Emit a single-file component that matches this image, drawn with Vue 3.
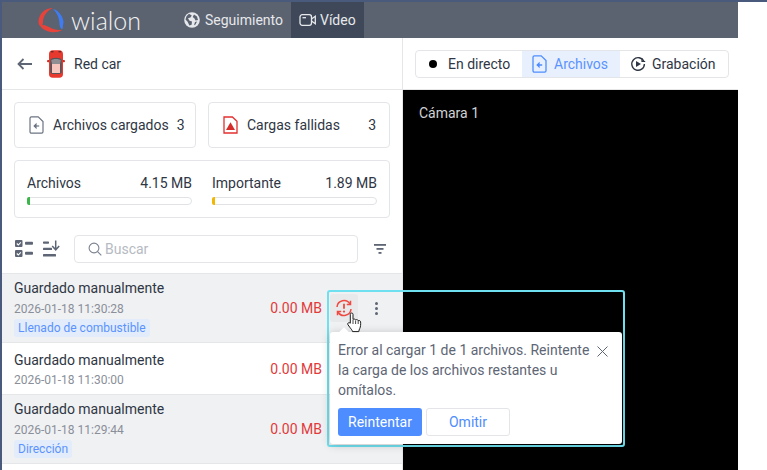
<script setup>
const rows = [
  { title: 'Guardado manualmente', time: '2026-01-18 11:30:28', tag: 'Llenado de combustible', shaded: true },
  { title: 'Guardado manualmente', time: '2026-01-18 11:30:00', tag: '', shaded: false },
  { title: 'Guardado manualmente', time: '2026-01-18 11:29:44', tag: 'Dirección', shaded: true },
]
</script>

<template>
  <div class="page">
    <div class="window">
      <header class="topbar">
        <div class="logo">
          <svg class="logo-mark" width="30" height="30" viewBox="0 0 30 30">
            <path d="M17 3C9 3 2.500 9 2.500 17c0 1.500.5 3 1.500 4 1.500 0 3-2 3-4C7 12 10 6 17 3z" fill="#e8433a"/>
            <path d="M4 20c1 4 7 6.500 11 7 4 .5 8 0 11-2-5 0-9-.5-13-3-3-1.500-6-3-9-2z" fill="#e8433a"/>
            <path d="M17 4c5 1 10 7 10.500 13l-1 7c-1.500 0-3-2-3-5 0-6-2.500-11-6.500-15z" fill="#3f7cf2"/>
          </svg>
          <span class="logo-text">wialon</span>
        </div>
        <nav class="nav">
          <div class="nav-item">
            <svg width="16" height="16" viewBox="0 0 16 16"><circle cx="8" cy="8" r="7.800" fill="#e6e8eb"/><path d="M5 1.800 7.800 3.600 6.500 5.600 4 6.200 5.500 8.800 8 9.500 7.600 12.800 5.400 13.400 3.600 9.800 1.500 7.500 2.500 4.200zM10 2.500l3 2 1 3.500-2.500.5-1-2-1.800-1.500zM11 10l2-.5-1.500 3-1.500.8z" fill="#5b6270"/></svg>
            <span>Seguimiento</span>
          </div>
          <div class="nav-item active">
            <svg width="18" height="14" viewBox="0 0 18 14" fill="none" stroke="#e6e8eb" stroke-width="1.300"><rect x="1" y="1.700" width="11.500" height="10.600" rx="2.200"/><path d="M3.500 4.700h3.500"/><path d="M12.500 6 16.300 3.300v7.400L12.500 8"/></svg>
            <span>Vídeo</span>
          </div>
        </nav>
      </header>

      <main class="body">
        <section class="left">
          <div class="vehicle">
            <svg width="15" height="12" viewBox="0 0 15 12" fill="none" stroke="#5e6675" stroke-width="1.800"><path d="M15 6H1.500M6.500 1 1.500 6l5 5"/></svg>
            <svg class="car" width="18" height="28" viewBox="0 0 18 28">
              <rect x="0" y="10" width="3" height="2.200" rx="1" fill="#c9302a"/><rect x="15" y="10" width="3" height="2.200" rx="1" fill="#c9302a"/>
              <rect x="2" y="0.300" width="14" height="27.400" rx="3.800" fill="#e8392f"/>
              <rect x="4" y="1" width="2.500" height="1.400" fill="#6a2a28"/><rect x="11.500" y="1" width="2.500" height="1.400" fill="#6a2a28"/>
              <path d="M3.300 10C4 7 14 7 14.700 10L14.700 22.500 13 24H5L3.300 22.500z" fill="#55555a"/>
              <path d="M4.300 10.500C5 8.500 13 8.500 13.700 10.500L13 14H5z" fill="#8f8f94"/>
              <rect x="5" y="14" width="8" height="9" fill="#f9c6bd"/>
            </svg>
            <span class="vehicle-name">Red car</span>
          </div>

          <div class="cards">
            <div class="card">
              <svg width="15" height="18" viewBox="0 0 15 18" fill="none" stroke="#6c7482" stroke-width="1.200"><path d="M1 2.200A1.400 1.400 0 0 1 2.400.8h6.800L14 5.600v10.200a1.400 1.400 0 0 1-1.400 1.400H2.400A1.400 1.400 0 0 1 1 15.800z"/><path d="M10.200 10H5.400"/><path d="M7 8.200 5.200 10 7 11.800z" fill="#6c7482"/></svg>
              <span class="card-label">Archivos cargados</span>
              <span class="card-count">3</span>
            </div>
            <div class="card">
              <svg width="15" height="18" viewBox="0 0 15 18" fill="none"><path d="M1 1h8.400L14 5.400V17H1z" stroke="#e32f2f" stroke-width="1.300"/><path d="M7.500 6.200 12 14H3z" fill="#d52b2b"/></svg>
              <span class="card-label">Cargas fallidas</span>
              <span class="card-count">3</span>
            </div>
          </div>

          <div class="storage">
            <div class="meter">
              <div class="meter-head"><span>Archivos</span><span>4.15 MB</span></div>
              <div class="track"><i class="fill green"></i></div>
            </div>
            <div class="meter">
              <div class="meter-head"><span>Importante</span><span>1.89 MB</span></div>
              <div class="track"><i class="fill amber"></i></div>
            </div>
          </div>

          <div class="toolbar">
            <svg width="18" height="18" viewBox="0 0 18 18" fill="#5e6675"><rect x="0" y="0" width="7.500" height="7" rx="1"/><rect x="0" y="10" width="7.500" height="7" rx="1"/><rect x="10" y="1.800" width="8" height="3" rx=".8"/><rect x="10" y="11.800" width="8" height="3" rx=".8"/><path d="M1.800 3.500 3.300 5 5.800 2.300M1.800 13.500 3.300 15l2.500-2.700" fill="none" stroke="#fff" stroke-width="1.100"/></svg>
            <svg class="sort" width="19" height="18" viewBox="0 0 19 18" fill="#5e6675"><rect x="0" y="1.500" width="6" height="2.200" rx=".6"/><rect x="0" y="7.800" width="9" height="2.200" rx=".6"/><rect x="0" y="14" width="13" height="2.500" rx=".6"/><path d="M12.700 .5v9M9.200 6l3.500 3.800L16.200 6" fill="none" stroke="#5e6675" stroke-width="1.500"/></svg>
            <div class="search">
              <svg width="14" height="14" viewBox="0 0 14 14" fill="none" stroke="#7b8290" stroke-width="1.100"><circle cx="6" cy="6" r="4.900"/><path d="m9.600 9.600 3.700 3.700"/></svg>
              <span>Buscar</span>
            </div>
            <svg class="filter" width="12" height="10" viewBox="0 0 12 10" fill="#5e6675"><rect x="0" y="0" width="12" height="1.800"/><rect x="2.500" y="4" width="7" height="1.800"/><rect x="4.500" y="8" width="3" height="1.800"/></svg>
          </div>

          <div class="list">
            <div v-for="(row, i) in rows" :key="i" class="row" :class="{ shaded: row.shaded, tall: row.tag }">
              <div class="row-main">
                <div class="row-title">{{ row.title }}</div>
                <div class="row-time">{{ row.time }}</div>
                <div v-if="row.tag" class="tag">{{ row.tag }}</div>
              </div>
              <div class="row-size">0.00 MB</div>
            </div>
          </div>
        </section>

        <section class="right">
          <div class="tabs-bar">
            <div class="tabs">
              <div class="tab"><i class="dot"></i><span>En directo</span></div>
              <div class="tab on">
                <svg width="15" height="18" viewBox="0 0 15 18" fill="none" stroke="#4d8dff" stroke-width="1.300"><path d="M1 2.200A1.400 1.400 0 0 1 2.400.8h6.800L14 5.600v10.200a1.400 1.400 0 0 1-1.400 1.400H2.400A1.400 1.400 0 0 1 1 15.800z"/><path d="M10.200 10H5.400"/><path d="M7 8.200 5.200 10 7 11.800z" fill="#4d8dff"/></svg>
                <span>Archivos</span>
              </div>
              <div class="tab">
                <svg width="16" height="16" viewBox="0 0 16 16" fill="none" stroke="#2f3644" stroke-width="1.400"><path d="M13.800 5.300A6.300 6.300 0 1 0 14.400 8"/><path d="M12 2.200v3.300h3.200" stroke-width="1.200"/><path d="M6 5l5 3-5 3z" fill="#2f3644" stroke="none"/></svg>
                <span>Grabación</span>
              </div>
            </div>
          </div>
          <div class="video"><span>Cámara 1</span></div>
        </section>
      </main>

      <div class="highlight">
        <div class="actions">
          <div class="retry">
            <svg width="18" height="18" viewBox="0 0 18 18" fill="none" stroke="#ef4a42" stroke-width="1.500"><path d="M2 8A7 7 0 0 1 15 5"/><path d="M16 10a7 7 0 0 1-13 3"/><path d="M15.500 1.800V5.500H11.800M2.500 16.200V12.500H6.200"/><path d="M9 4.700v5" stroke-width="1.800"/><circle cx="9" cy="12.600" r="1.100" fill="#ef4a42" stroke="none"/></svg>
          </div>
          <div class="more"><i></i><i></i><i></i></div>
        </div>
        <div class="popover">
          <div class="pop-top">
            <p>Error al cargar 1 de 1 archivos. Reintente la carga de los archivos restantes u omítalos.</p>
            <svg width="11" height="11" viewBox="0 0 11 11" fill="none" stroke="#5e6675" stroke-width="1"><path d="m.5.500 10 10M10.500.500l-10 10"/></svg>
          </div>
          <div class="pop-actions">
            <button class="btn primary">Reintentar</button>
            <button class="btn ghost">Omitir</button>
          </div>
        </div>
      </div>

      <svg class="cursor" width="16" height="21" viewBox="0 0 16 21">
        <path d="M3.300 2.200c0-1.600 2.700-1.600 2.700 0v5.300c.8-.8 2.300-.5 2.600.4.800-.6 2.300-.3 2.600.7.900-.4 2.300.1 2.400 1.300.2 2.400 0 5-.8 6.500-.5 1.100-1 2-1 3.200H5.500c-.2-1.400-1.200-2.300-2.300-3.800L.9 12.700c-.9-1.500 1-2.800 2.400-1.500z" fill="#fff" stroke="#1c1c1c" stroke-width="1"/>
        <path d="M6 8v4M8.600 8.500v3.500M11.200 9v3" stroke="#1c1c1c" stroke-width=".8"/>
      </svg>
    </div>
  </div>
</template>

<style>
html, body { margin: 0; background: #fff; }
</style>

<style scoped>
.page {
  width: 767px;
  height: 470px;
  overflow: hidden;
  position: relative;
  box-sizing: border-box;
  background: #fff;
  border-top: 2px solid #4a5a7c;
  border-left: 2px solid #4a5a7c;
  font-family: Roboto, "Liberation Sans", sans-serif;
  color: #2f3644;
  font-size: 14px;
}
svg { flex: none; }
.window { width: 736px; height: 468px; position: relative; }
.topbar { height: 36px; background: #5b6270; display: flex; align-items: center; color: #e6e8eb; }
.logo { display: flex; align-items: center; margin-left: 34px; width: 148px; flex: none; }
.logo-text { font-family: Lato, Roboto, sans-serif; font-weight: 300; font-size: 25px; line-height: 36px; margin-left: 5px; color: #f2f3f4; }
.nav { display: flex; height: 100%; }
.nav-item { display: flex; align-items: center; gap: 5px; padding: 0 8px 0 0; font-size: 14px; }
.nav-item.active { background: #3f4859; padding: 0 8px 0 8px; gap: 3px; }
.body { display: flex; height: 432px; }
.left { width: 400px; border-right: 1px solid #e5e6e8; flex: none; }
.vehicle { height: 51px; border-bottom: 1px solid #e5e6e8; display: flex; align-items: center; padding-left: 15px; }
.car { margin-left: 15px; }
.vehicle-name { margin-left: 9px; }
.cards { display: flex; gap: 12px; padding: 12px 0 0 12px; }
.card { width: 182px; height: 46px; box-sizing: border-box; border: 1px solid #e3e5e8; border-radius: 4px; display: flex; align-items: center; padding: 0 13px 0 14px; }
.card-label { margin-left: 9px; flex: 1; white-space: nowrap; }
.card-count { margin-left: 8px; }
.storage { margin: 12px 0 0 12px; width: 376px; height: 58px; box-sizing: border-box; border: 1px solid #e3e5e8; border-radius: 4px; display: flex; gap: 20px; padding: 14px 12px 0; }
.meter { flex: 1; }
.meter-head { display: flex; justify-content: space-between; line-height: 17px; }
.track { margin-top: 5px; height: 8px; box-sizing: border-box; border: 1px solid #e0e2e5; border-radius: 4px; }
.fill { display: block; width: 2.500px; height: 8px; margin: -1px 0 0 -1px; border-radius: 2px 0 0 2px; }
.green { background: #3cb64a; }
.amber { background: #f2b705; }
.toolbar { display: flex; align-items: center; padding: 17px 0 0 13px; height: 28px; margin-bottom: 10px; }
.sort { margin-left: 10px; }
.search { margin-left: 12px; width: 284px; height: 28px; box-sizing: border-box; border: 1px solid #e3e5e8; border-radius: 4px; display: flex; align-items: center; gap: 3px; padding-left: 13px; color: #b6bac2; }
.filter { margin-left: 16px; }
.list { border-top: 1px solid #e5e6e8; }
.row { display: flex; justify-content: space-between; border-bottom: 1px solid #e5e6e8; padding: 0 80px 0 12px; background: #fff; }
.row.shaded { background: #f0f1f3; }
.row-main { padding: 9px 0 7px; }
.row.tall .row-main { padding: 6px 0 5px; }
.row-title { line-height: 17px; }
.row-time { font-size: 12px; line-height: 14px; margin-top: 4px; color: #8a8f99; }
.row.tall .row-time { margin-top: 5px; }
.tag { width: fit-content; margin-top: 3px; font-size: 12px; line-height: 18px; padding: 0 4px; border-radius: 3px; background: #e3ecfa; color: #5a93ff; }
.row-size { color: #e13a3a; align-self: center; }
.right { flex: 1; display: flex; flex-direction: column; }
.tabs-bar { height: 51px; border-bottom: 1px solid #e5e6e8; padding-left: 12px; display: flex; align-items: center; }
.tabs { width: 314px; height: 28px; box-sizing: border-box; border: 1px solid #e3e5e8; border-radius: 4px; display: flex; overflow: hidden; }
.tab { display: flex; align-items: center; }
.tab:nth-child(1) { width: 106px; padding-left: 13px; box-sizing: border-box; }
.tab.on { width: 98px; background: #e8f0fe; color: #5a93ff; padding-left: 10px; box-sizing: border-box; gap: 7px; }
.tab:nth-child(3) { padding-left: 10px; gap: 6px; }
.dot { width: 8px; height: 8px; border-radius: 50%; background: #000; margin-right: 11px; }
.video { flex: 1; background: #000; color: #d0d2d5; padding: 15px 16px; line-height: 17px; }
.highlight { position: absolute; left: 325px; top: 288px; width: 298px; height: 157px; box-sizing: border-box; border: 2px solid #6fe0ef; border-radius: 3px; padding: 2px 1px; }
.actions { display: flex; align-items: center; height: 28px; }
.retry { width: 28px; height: 28px; border-radius: 3px; background: #e8e9eb; display: flex; align-items: center; justify-content: center; }
.more { margin-left: 17px; display: flex; flex-direction: column; gap: 2px; }
.more i { width: 3px; height: 3px; border-radius: 50%; background: #5e6675; }
.popover { position: absolute; left: 1px; top: 40px; width: 292px; height: 112px; box-sizing: border-box; background: #fff; border-radius: 3px; padding: 8px 8px 0; box-shadow: 0 1px 10px rgba(0,0,0,.2); }
.popover::before { content: ""; position: absolute; left: 10px; top: -3px; width: 8px; height: 8px; background: #fff; transform: rotate(45deg); }
.pop-top { display: flex; align-items: flex-start; height: 60px; position: relative; }
.pop-top p { margin: 0; width: 256px; color: #5e6675; line-height: 20px; }
.pop-top svg { margin: 6px 0 0 3px; }
.pop-actions { display: flex; gap: 4px; margin-top: 8px; }
.btn { height: 28px; border-radius: 3px; font: 14px Roboto, sans-serif; padding: 0; }
.primary { width: 84px; background: #4d8dff; border: 0; color: #fff; }
.ghost { width: 84px; background: #fff; border: 1px solid #e3e5e8; color: #4d8dff; }
.cursor { position: absolute; left: 345px; top: 310px; }
</style>
